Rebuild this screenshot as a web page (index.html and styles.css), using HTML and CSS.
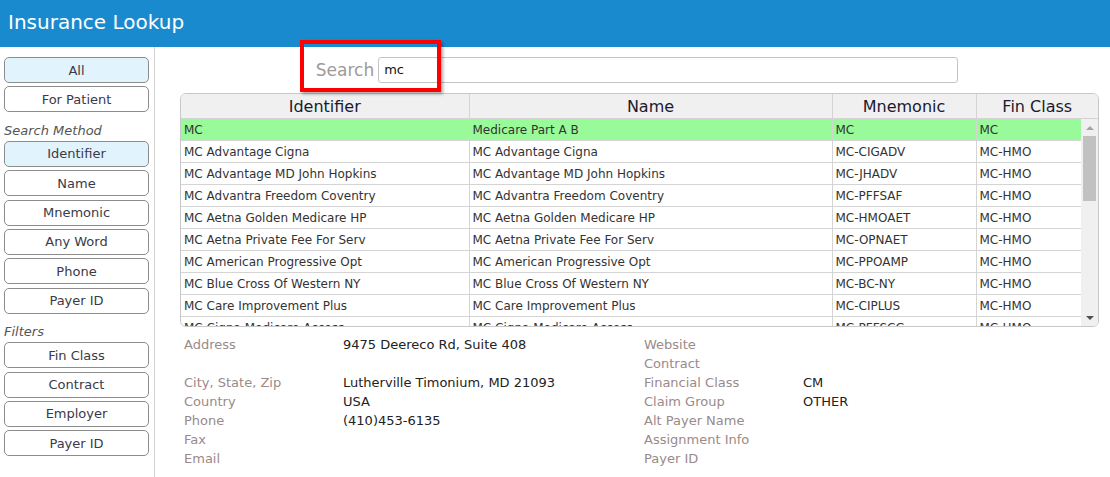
FILE: index.html
```html
<!DOCTYPE html>
<html lang="en">
<head>
    <meta charset="UTF-8">
    <title>Insurance Lookup</title>
    <link rel="stylesheet" href="styles.css">
</head>
<body>
    <div class="topbar">Insurance Lookup</div>

    <div class="layout">
        <div class="sidebar">
            <button class="side-btn active">All</button>
            <button class="side-btn">For Patient</button>

            <div class="side-label">Search Method</div>
            <button class="side-btn active">Identifier</button>
            <button class="side-btn">Name</button>
            <button class="side-btn">Mnemonic</button>
            <button class="side-btn">Any Word</button>
            <button class="side-btn">Phone</button>
            <button class="side-btn">Payer ID</button>

            <div class="side-label">Filters</div>
            <button class="side-btn">Fin Class</button>
            <button class="side-btn">Contract</button>
            <button class="side-btn">Employer</button>
            <button class="side-btn">Payer ID</button>
        </div>

        <div class="main">
            <div class="search-row">
                <label class="search-label" for="search">Search</label>
                <input class="search-input" id="search" type="text" value="mc">
            </div>
            <div class="highlight-box"></div>

            <div class="grid">
                <table class="grid-head">
                    <colgroup>
                        <col class="c-id"><col class="c-name"><col class="c-mnem"><col>
                    </colgroup>
                    <tr>
                        <th>Identifier</th>
                        <th>Name</th>
                        <th>Mnemonic</th>
                        <th>Fin Class</th>
                    </tr>
                </table>
                <div class="grid-body">
                    <div class="grid-rows">
                        <table>
                            <colgroup>
                                <col class="c-id"><col class="c-name"><col class="c-mnem"><col>
                            </colgroup>
                            <tbody id="rows"></tbody>
                        </table>
                    </div>
                    <div class="vscroll">
                        <div class="vscroll-btn up"></div>
                        <div class="vscroll-track">
                            <div class="vscroll-thumb"></div>
                        </div>
                        <div class="vscroll-btn down"></div>
                    </div>
                </div>
            </div>

            <div class="details">
                <div class="detail-col">
                    <div class="lbl">Address</div><div class="val">9475 Deereco Rd, Suite 408</div>
                    <div class="lbl"></div><div class="val"></div>
                    <div class="lbl">City, State, Zip</div><div class="val">Lutherville Timonium, MD 21093</div>
                    <div class="lbl">Country</div><div class="val">USA</div>
                    <div class="lbl">Phone</div><div class="val">(410)453-6135</div>
                    <div class="lbl">Fax</div><div class="val"></div>
                    <div class="lbl">Email</div><div class="val"></div>
                </div>
                <div class="detail-col">
                    <div class="lbl">Website</div><div class="val"></div>
                    <div class="lbl">Contract</div><div class="val"></div>
                    <div class="lbl">Financial Class</div><div class="val">CM</div>
                    <div class="lbl">Claim Group</div><div class="val">OTHER</div>
                    <div class="lbl">Alt Payer Name</div><div class="val"></div>
                    <div class="lbl">Assignment Info</div><div class="val"></div>
                    <div class="lbl">Payer ID</div><div class="val"></div>
                </div>
            </div>
        </div>
    </div>

    <script>
        // identifier, name, mnemonic, fin class
        var payers = [
            ['MC', 'Medicare Part A B', 'MC', 'MC'],
            ['MC Advantage Cigna', 'MC Advantage Cigna', 'MC-CIGADV', 'MC-HMO'],
            ['MC Advantage MD John Hopkins', 'MC Advantage MD John Hopkins', 'MC-JHADV', 'MC-HMO'],
            ['MC Advantra Freedom Coventry', 'MC Advantra Freedom Coventry', 'MC-PFFSAF', 'MC-HMO'],
            ['MC Aetna Golden Medicare HP', 'MC Aetna Golden Medicare HP', 'MC-HMOAET', 'MC-HMO'],
            ['MC Aetna Private Fee For Serv', 'MC Aetna Private Fee For Serv', 'MC-OPNAET', 'MC-HMO'],
            ['MC American Progressive Opt', 'MC American Progressive Opt', 'MC-PPOAMP', 'MC-HMO'],
            ['MC Blue Cross Of Western NY', 'MC Blue Cross Of Western NY', 'MC-BC-NY', 'MC-HMO'],
            ['MC Care Improvement Plus', 'MC Care Improvement Plus', 'MC-CIPLUS', 'MC-HMO'],
            ['MC Cigna Medicare Access', 'MC Cigna Medicare Access', 'MC-PFFSCG', 'MC-HMO'],
            ['MC Coventry Advantra', 'MC Coventry Advantra', 'MC-COVADV', 'MC-HMO'],
            ['MC Empire Medicare Choice', 'MC Empire Medicare Choice', 'MC-EMPIRE', 'MC-HMO']
        ];

        var tbody = document.getElementById('rows');
        payers.forEach(function(p, i) {
            var tr = document.createElement('tr');
            if (i === 0) tr.className = 'selected';
            p.forEach(function(text) {
                var td = document.createElement('td');
                td.textContent = text;
                tr.appendChild(td);
            });
            tbody.appendChild(tr);
        });
    </script>
</body>
</html>
```

FILE: styles.css
```css
body {
    margin: 0;
    font-family: Verdana, "DejaVu Sans", sans-serif;
    color: #333;
    background: #fff;
}
.topbar {
    height: 47px;
    line-height: 45px;
    background-color: #1a8acf;
    color: white;
    font-size: 20px;
    padding-left: 8px;
}
.layout {
    display: flex;
    height: 430px;
}
.sidebar {
    flex-shrink: 0;
    width: 150px;
    padding: 10px 0 0 4px;
    border-right: 1px solid #d4d4d4;
    display: flex;
    flex-direction: column;
    align-items: flex-start;
}
.side-btn {
    width: 145px;
    height: 26px;
    margin-bottom: 3.4px;
    background: white;
    border: 1px solid #8c8c8c;
    border-radius: 5px;
    font-family: inherit;
    font-size: 13px;
    color: #3a3a48;
    padding: 0;
}
.side-btn.active {
    background-color: #e1f3fc;
}
.side-label {
    font-style: italic;
    font-size: 13px;
    color: #555;
    height: 25px;
    line-height: 30px;
}
.main {
    flex: 1;
    min-width: 0;
    position: relative;
    padding: 9px 12px 0 25px;
}
.search-row {
    display: flex;
    align-items: center;
    justify-content: center;
    gap: 4px;
    padding-right: 4px;
    height: 27px;
}
.search-label {
    font-size: 17px;
    color: #a09999;
}
.search-input {
    width: 580px;
    height: 26px;
    box-sizing: border-box;
    border: 1px solid #c4c4c4;
    border-radius: 3px;
    padding: 0 5px;
    font-family: inherit;
    font-size: 13px;
    color: #111;
}
/* red marker drawn over the search field */
.highlight-box {
    position: absolute;
    left: 145px;
    top: -7px;
    width: 133px;
    height: 44px;
    border: 4px solid #f00;
    box-shadow: 2px 2px 3px rgba(0, 0, 0, 0.35);
}
.grid {
    margin-top: 10px;
    border: 1px solid #c8c8c8;
    border-radius: 6px;
    overflow: hidden;
    width: 917px;
}
.grid table {
    border-collapse: collapse;
    table-layout: fixed;
}
.grid-head {
    width: 100%;
    background-color: #f0f0f0;
}
.grid-head th {
    height: 24px;
    padding: 0;
    font-weight: normal;
    font-size: 16px;
    color: #1a1a2e;
    border-left: 1px solid #d4d4d4;
    border-bottom: 1px solid #d4d4d4;
}
.grid-head th:first-child {
    border-left: none;
}
.c-id { width: 288px; }
.c-name { width: 363px; }
.c-mnem { width: 144px; }
.grid-body {
    display: flex;
    height: 207px;
}
.grid-rows {
    width: 900px;
    overflow: hidden;
}
.grid-rows table {
    width: 900px;
}
.grid-rows td {
    height: 21px;
    padding: 0 0 0 3px;
    font-size: 12px;
    color: #333;
    white-space: nowrap;
    overflow: hidden;
    border-left: 1px solid #d4d4d4;
    border-bottom: 1px solid #d4d4d4;
}
.grid-rows td:first-child {
    border-left: none;
}
.grid-rows tr.selected td {
    background-color: #98fa98;
}
/* scrollbar drawn beside the rows */
.vscroll {
    width: 17px;
    background: #f0f0f0;
    display: flex;
    flex-direction: column;
}
.vscroll-btn {
    height: 17px;
    display: flex;
    align-items: center;
    justify-content: center;
}
.vscroll-btn::after {
    content: "";
    border-left: 4px solid transparent;
    border-right: 4px solid transparent;
}
.vscroll-btn.up::after {
    border-bottom: 4px solid #a3a3a3;
}
.vscroll-btn.down::after {
    border-top: 4px solid #505050;
}
.vscroll-track {
    flex: 1;
    padding: 0 2px;
}
.vscroll-thumb {
    height: 65px;
    background: #c1c1c1;
}
.details {
    display: flex;
    padding: 8px 0 0 4px;
}
.detail-col {
    width: 460px;
    display: grid;
    grid-template-columns: 159px 1fr;
    grid-auto-rows: 19px;
    font-size: 13px;
    line-height: 19px;
}
.detail-col + .detail-col {
    width: auto;
    flex: 1;
}
.lbl {
    color: #9a8a8a;
}
.val {
    color: #222;
}
```
